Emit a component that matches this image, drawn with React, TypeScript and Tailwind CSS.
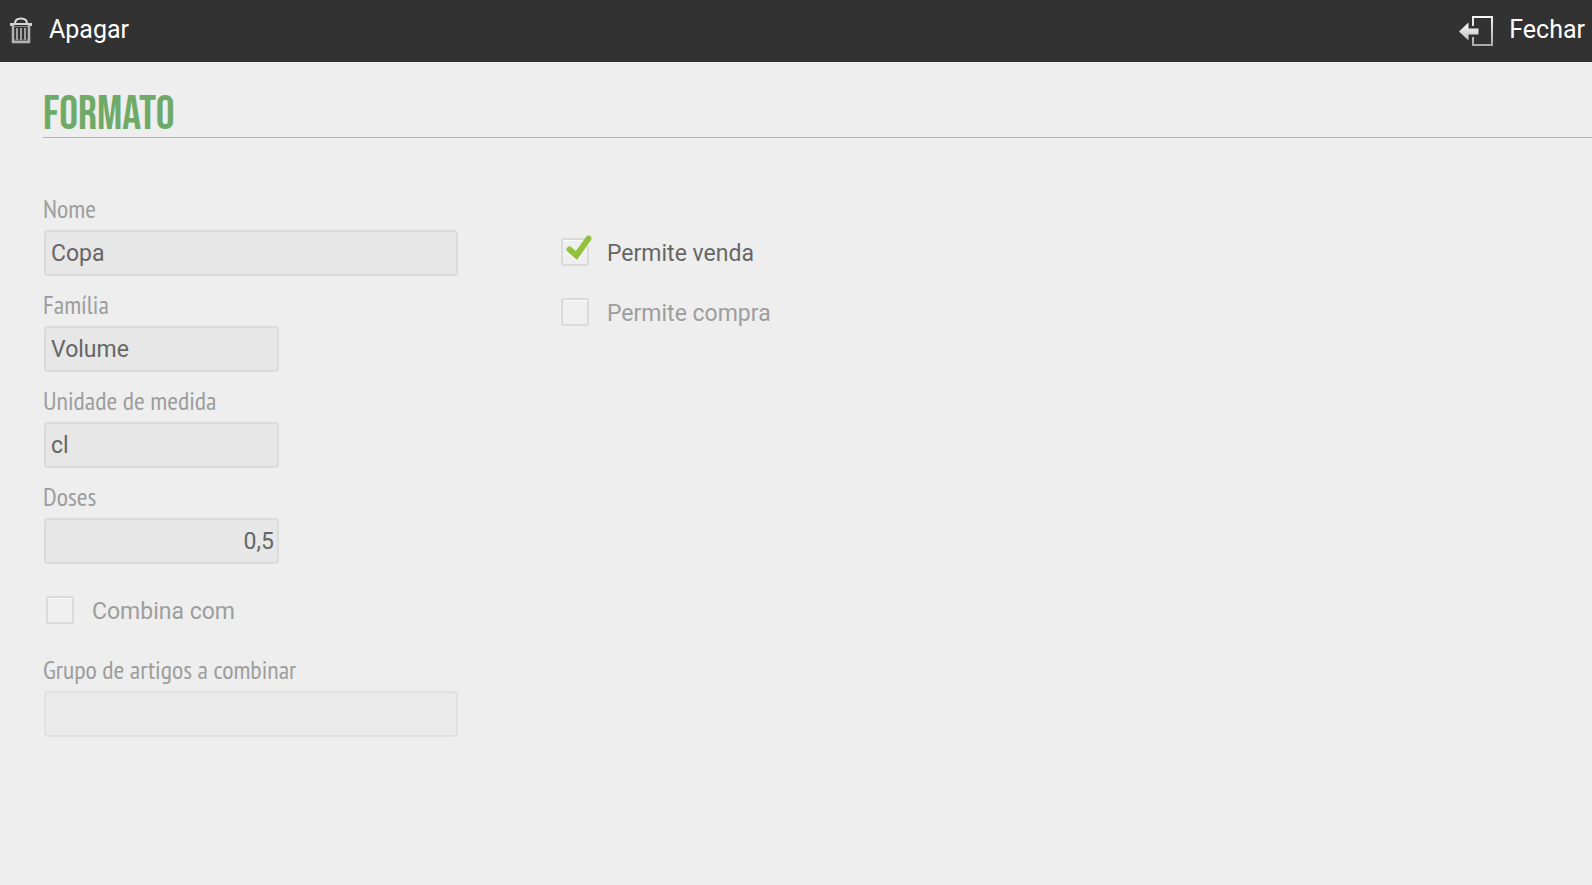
import { useState } from "react";

type FieldProps = {
  id: string;
  label: string;
  value?: string;
  wide?: boolean;
  numeric?: boolean;
  disabled?: boolean;
};

function Field({ id, label, value = "", wide, numeric, disabled }: FieldProps) {
  return (
    <div className="flex flex-col">
      <label
        htmlFor={id}
        className="h-9 text-[26px] leading-[30px] text-[#9d9d9d] font-['PT_Sans_Narrow','Roboto_Condensed','Open_Sans_Condensed',sans-serif]"
      >
        {label}
      </label>
      <input
        id={id}
        name={id}
        type="text"
        defaultValue={value}
        disabled={disabled}
        className={`ml-px h-[46px] max-w-full rounded border-2 px-[5px] text-[23px] text-[#666] focus:outline-none ${
          wide ? "w-[414px]" : "w-[235px]"
        } ${numeric ? "pr-[3px] text-right" : ""} ${
          disabled ? "border-[#e1e1e1] bg-[#eaeaea]" : "border-[#dbdbdb] bg-[#e7e7e7]"
        }`}
      />
    </div>
  );
}

function Check({ id, label, initial = false }: { id: string; label: string; initial?: boolean }) {
  const [checked, setChecked] = useState(initial);

  return (
    <label
      htmlFor={id}
      className={`flex h-8 items-start gap-[18px] text-[23px] leading-8 ${checked ? "text-[#666]" : "text-[#9d9d9d]"}`}
    >
      <span className="relative block h-7 w-7">
        <input
          id={id}
          name={id}
          type="checkbox"
          checked={checked}
          onChange={(e) => setChecked(e.target.checked)}
          className="block h-7 w-7 appearance-none rounded-[3px] border-2 border-[#dadada] bg-[#efefef] shadow-[inset_0_1px_0_#fafafa]"
        />
        {checked && (
          <svg viewBox="0 0 32 32" className="pointer-events-none absolute -top-1 left-0 h-8 w-8" fill="none">
            <path d="M9 17L15.5 23L27.5 5" stroke="#f8f8f8" strokeWidth="7" strokeLinejoin="round" strokeLinecap="round" />
            <path d="M8.5 15.5L15.5 21.5L27.5 4.5" stroke="#93c13d" strokeWidth="6" strokeLinecap="round" />
          </svg>
        )}
      </span>
      {label}
    </label>
  );
}

function TrashIcon() {
  return (
    <svg viewBox="0 0 22 28" className="h-7 w-[22px]" fill="none" stroke="#c9c9c9">
      <path d="M5 7.5C5 4 7.5 2.5 11 2.5s6 1.5 6 5" stroke="#dedede" strokeWidth="2" />
      <path d="M1 10V8h20V10" stroke="#d4d4d4" strokeWidth="2" />
      <path d="M3 9V26H19V9" stroke="#b4b4b4" strokeWidth="2.5" />
      <path d="M7 12V24M11 12V24M15 12V24" strokeWidth="1.5" />
      <path d="M4 10.5H18M4 24H18" stroke="#8a8a8a" />
    </svg>
  );
}

function ExitIcon() {
  return (
    <svg viewBox="0 0 36 32" className="h-8 w-9" fill="none">
      <defs>
        <linearGradient id="exit" x1="0" y1="0" x2="0" y2="32" gradientUnits="userSpaceOnUse">
          <stop offset="0" stopColor="#fff" />
          <stop offset="1" stopColor="#a8a8a8" />
        </linearGradient>
        <linearGradient id="arrow" x1="0" y1="8" x2="0" y2="28" gradientUnits="userSpaceOnUse">
          <stop offset="0" stopColor="#fff" />
          <stop offset="1" stopColor="#bbb" />
        </linearGradient>
      </defs>
      <path d="M15 12V3H34V31H15V23" stroke="url(#exit)" strokeWidth="2" />
      <path d="M1 17.5L10.500 8.5V14.5H20.5V20.5H10.500V26.5Z" fill="url(#arrow)" />
    </svg>
  );
}

export default function App() {
  return (
    <div className="min-h-screen bg-[#eee] font-[Roboto,sans-serif]">
      <header className="flex h-[62px] items-center justify-between bg-[#323232] pr-[7px] pb-0.5 pl-[10px] text-[25px] text-white">
        <button type="button" className="flex items-center gap-[17px]">
          <TrashIcon />
          Apagar
        </button>
        <button type="button" className="flex items-center gap-[15px]">
          <ExitIcon />
          Fechar
        </button>
      </header>

      <main className="pl-[43px]">
        <h1 className="h-[76px] border-b border-[#b3b3b3] pt-[25px] text-[47px] leading-[56px] font-normal text-[#6fab67] font-['Bebas_Neue','Roboto_Condensed','Open_Sans_Condensed',sans-serif]">
          FORMATO
        </h1>

        <form className="flex flex-wrap gap-x-[103px] pt-14">
          <div className="flex flex-col gap-[14px]">
            <Field id="nome" label="Nome" value="Copa" wide />
            <Field id="familia" label="Família" value="Volume" />
            <Field id="unidade" label="Unidade de medida" value="cl" />
            <Field id="doses" label="Doses" value="0,5" numeric />
            <div className="pt-[18px] pb-[13px] pl-[3px]">
              <Check id="combina" label="Combina com" />
            </div>
            <Field id="grupo" label="Grupo de artigos a combinar" wide disabled />
          </div>
          <div className="flex flex-col gap-7 pt-11">
            <Check id="venda" label="Permite venda" initial />
            <Check id="compra" label="Permite compra" />
          </div>
        </form>
      </main>
    </div>
  );
}
